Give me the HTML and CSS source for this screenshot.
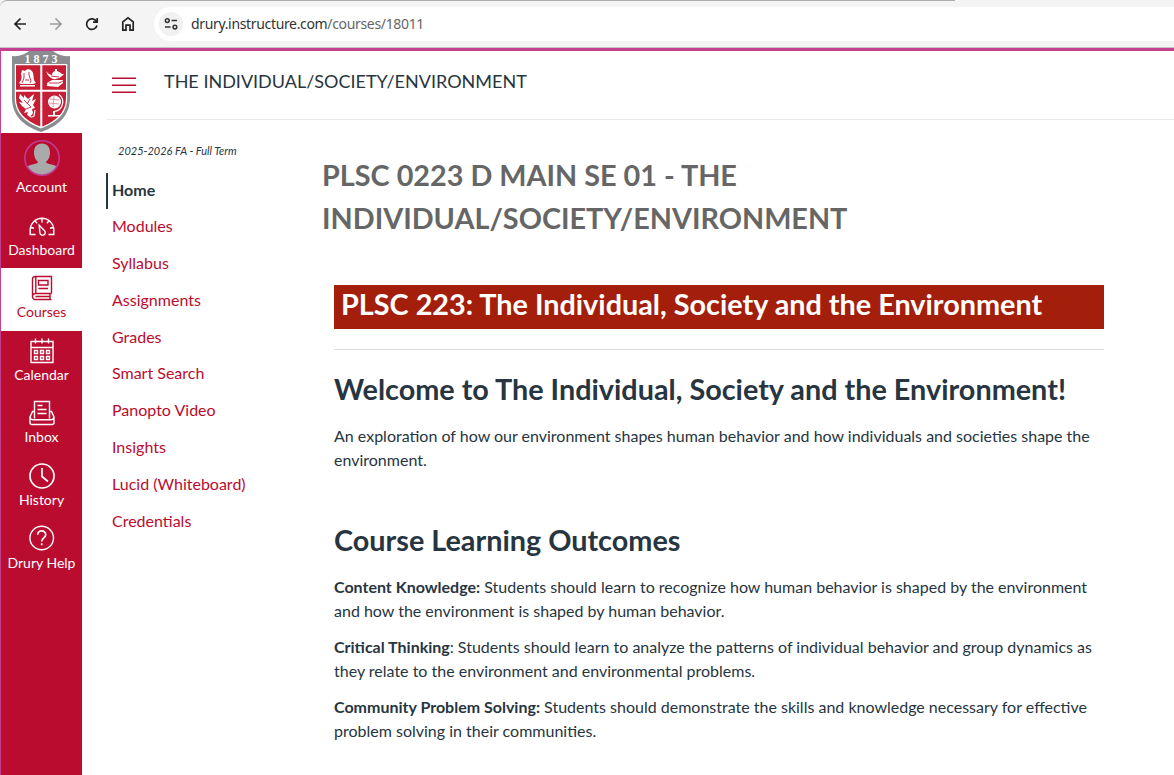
FILE: index.html
```html
<!DOCTYPE html>
<html lang="en">
<head>
<meta charset="utf-8">
<title>THE INDIVIDUAL/SOCIETY/ENVIRONMENT</title>
<link rel="stylesheet" href="styles.css">
</head>
<body>
<header class="browser">
  <div class="tabline"></div>
  <svg class="browser-icons" width="154" height="44" viewBox="0 2 154 44" fill="none" stroke="#222" stroke-width="1.7">
    <path d="M26 24H15M20.500 18.500L15 24l5.500 5.500"/>
    <path stroke="#9c9c9c" d="M50 24h11M55.500 18.500L61 24l-5.500 5.500"/>
    <path d="M96.500 21.500A5.300 5.300 0 1 0 97 25.500M97.200 18v4.200H93"/>
    <path d="M122.800 21.800l5.200-4 5.200 4v8.400h-3.200v-5h-4v5h-3.200z"/>
  </svg>
  <div class="address">
    <svg class="tune" width="24" height="24" viewBox="0 0 24 24" fill="none" stroke="#333" stroke-width="1.5"><circle cx="8.300" cy="8.600" r="1.900"/><path d="M12.500 8.600H18M6 15.100h5.500"/><circle cx="15.900" cy="15.100" r="1.900"/></svg>
    <span class="url">drury.instructure.com<span class="path">/courses/18011</span></span>
  </div>
</header>
<div class="app">
  <nav class="global">
    <div class="crest">
      <svg width="60" height="82" viewBox="0 0 60 82">
        <path fill="#8a8c8f" d="M1 5Q11 6 18 0H42Q49 6 59 5V47C59 64 48 75 30 81C12 75 1 64 1 47Z"/>
        <path fill="#fff" d="M3.800 13H56.200V47C56.200 62 46 71.500 30 77.500C14 71.500 3.800 62 3.800 47Z"/>
        <path fill="#c61f35" d="M5 14.200H29.300V38.800H5zM31.300 14.200H55V38.800H31.300zM5 40.800H29.300V75.600C14 69.500 5 61 5 47zM31.300 40.800H55V47C55 61 46 69.500 31.300 75.600z"/>
        <g fill="#fff">
          <path d="M11 19l3 1c2-3 7-2 8 2 1 4 0 7 3 10l-3 1H10l-2-1c3-3 3-6 2-9z"/>
          <path d="M9 34h15v1.500H9z"/>
          <path d="M35 20q3 4 6 4 0-3 3-4v-2h2v2q3 1 5 3l2 0-2 2q-4 4-9 3-5-2-7-8z"/>
          <path d="M36 32l5-3h11v3l-5 4-11-1z"/>
          <path d="M9 43l4 4v-3l4 4 6-5-2 7 4-2-3 6 2 3-3 1 1 4q-2 5-6 2l1-3-4 1 2-4-4-3-3-4 4 1-4-5z"/>
          <circle cx="43.500" cy="51" r="6.500"/>
          <path d="M37 64h12v1.500H37zM42 60h2v5h-2z"/>
        </g>
        <g fill="none" stroke="#c61f35" stroke-width=".9">
          <path d="M13 22v5l-2 5M18 21v3l2 6-1 2M14 29h4M38 32h10l4-2M40 25l8 1M13 49l7 7M19 48l-3 5M15 58l5-2"/>
          <path stroke="#e08a96" d="M39 48l9 1M38 52l10 1M43 45l-1 11"/>
        </g>
        <path fill="none" stroke="#fff" stroke-width="1.200" d="M48 43.500a9.500 9.500 0 0 1-5 17M17 62q2 6 6 3l1-6"/>
        <text class="year" x="31.500" y="11.500" text-anchor="middle">1873</text>
      </svg>
    </div>
    <a class="item account"><svg width="36" height="36" viewBox="0 0 36 36"><clipPath id="avatar"><circle cx="18" cy="18" r="17"/></clipPath><g clip-path="url(#avatar)" fill="#aaa"><path d="M18 3.500c5.500 0 8.300 4 8 10-.3 4-2 7-4 8.500.5 3 10 1.500 12 6.500v7H2v-7c2-5 11.500-3.500 12-6.500-2-1.500-3.700-4.500-4-8.500-.3-6 2.500-10 8-10z"/></g><circle cx="18" cy="18" r="17.200" fill="none" stroke="#c03b94" stroke-width="1.600"/></svg><span>Account</span></a>
    <a class="item"><svg width="26" height="26" viewBox="0 0 26 26"><path d="M6.500 21.500H1.200V17a11.800 11.800 0 0 1 23.600 0v4.500h-5.300M13 5.500v4M2 14.500l3 .8M24 14.500l-3 .8M6 8l2.200 2.200M20 8l-2.200 2.200M10.200 12.300l5.100 5.200a2.700 2.700 0 1 1-4.400 2.400z"/></svg><span>Dashboard</span></a>
    <a class="item active"><svg width="26" height="26" viewBox="0 0 26 26"><path d="M22.500 18.500V1.500H6.500a3 3 0 0 0-3 3v17.300a2.700 2.700 0 0 0 2.700 2.700h16.300M22.500 18.500H6.200a2.900 2.900 0 0 0-2.700 2.800M6.800 1.800v16.500M9.500 5.500h9.500v4.500H9.500zM9.500 13.500H19M6.500 21.500h15M21 18.500v6"/></svg><span>Courses</span></a>
    <a class="item"><svg width="26" height="26" viewBox="0 0 26 26"><path d="M2 3.500h22v21H2zM2 9.500h22M6.500.5v5M13 .5v5M19.500.5v5M5.500 12.500h3v3h-3zM11.500 12.500h3v3h-3zM17.500 12.500h3v3h-3zM5.500 18.500h3v3h-3zM11.500 18.500h3v3h-3zM17.500 18.500h3v3h-3z"/></svg><span>Calendar</span></a>
    <a class="item"><svg width="26" height="26" viewBox="0 0 26 26"><path d="M5.500 18.500V1.500h15v17M5.200 11.500H3.500L1 17v5.500a2 2 0 0 0 2 2h20a2 2 0 0 0 2-2V17l-2.500-5.500h-1.700M1.200 17c.3 2 1.500 2.800 3 2.800h17.600c1.500 0 2.700-.8 3-2.800M8.500 5.500h5M8.500 9.500h9M8.500 13.500h9"/></svg><span>Inbox</span></a>
    <a class="item"><svg width="26" height="26" viewBox="0 0 26 26"><g stroke-width="1.700"><circle cx="13" cy="13" r="12"/><path d="M13 5v8.500l6 5"/></g></svg><span>History</span></a>
    <a class="item"><svg width="26" height="26" viewBox="0 0 26 26"><circle cx="12.700" cy="13" r="11.800"/><path stroke-width="1.700" d="M8.700 9.800c0-5.200 8-5.200 8 0 0 3.300-4 3-4 6.700M12.700 18.200v2"/></svg><span>Drury Help</span></a>
  </nav>
  <main class="page">
    <div class="topbar"><div class="burger"><i></i><i></i><i></i></div><span class="crumb">THE INDIVIDUAL/SOCIETY/ENVIRONMENT</span></div>
    <div class="columns">
      <nav class="course-nav">
        <div class="term">2025-2026 FA - Full Term</div>
        <a class="current">Home</a><a>Modules</a><a>Syllabus</a><a>Assignments</a><a>Grades</a><a>Smart Search</a><a>Panopto Video</a><a>Insights</a><a>Lucid (Whiteboard)</a><a>Credentials</a>
      </nav>
      <article class="content">
        <h1 class="course-title">PLSC 0223 D MAIN SE 01 - THE<br>INDIVIDUAL/SOCIETY/ENVIRONMENT</h1>
        <div class="body">
          <h2 class="banner">PLSC 223: The Individual, Society and the Environment</h2>
          <div class="rule"></div>
          <h2 class="welcome">Welcome to The Individual, Society and the Environment!</h2>
          <p>An exploration of how our environment shapes human behavior and how individuals and societies shape the<br>environment.</p>
          <h2 class="outcomes">Course Learning Outcomes</h2>
          <p><b>Content Knowledge:</b> Students should learn to recognize how human behavior is shaped by the environment<br>and how the environment is shaped by human behavior.</p>
          <p><b>Critical Thinking</b>: Students should learn to analyze the patterns of individual behavior and group dynamics as<br>they relate to the environment and environmental problems.</p>
          <p><b>Community Problem Solving:</b> Students should demonstrate the skills and knowledge necessary for effective<br>problem solving in their communities.</p>
        </div>
      </article>
    </div>
  </main>
</div>
</body>
</html>
```
FILE: styles.css
```css
* { box-sizing: border-box; }
body { margin: 0; height: 775px; overflow: hidden; background: #fff; color: #273540; font: 16px/24px Lato, sans-serif; }
.browser { height: 48px; background: #f4f4f4; border-bottom: 1px solid #c3c5c5; display: grid; grid-template-columns: 154px 1fr; grid-template-rows: 7px 34px; }
.tabline { grid-column: 1 / 3; width: 955px; height: 7px; border-top: 1px solid #adadad; border-top-left-radius: 7px; }
.browser-icons { margin-top: -5px; }
.address { height: 34px; background: #fff; border-radius: 17px 0 0 17px; display: flex; align-items: center; padding-left: 5px; }
.tune { background: #f1f1f1; border-radius: 50%; }
.url { margin-left: 8px; font: 14px/20px "Noto Sans", sans-serif; letter-spacing: -.34px; color: #333; white-space: nowrap; }
.path { color: #666; }
.app { display: flex; height: 727px; border-top: 3px solid #c43e91; border-left: 1px solid #c43e91; }
.global { width: 81px; background: #ba0c2f; flex: none; }
.crest { height: 82px; background: #fff; padding: 0 0 0 10px; }
.crest svg { display: block; }
.year { font: bold 12px "Liberation Serif", serif; letter-spacing: 3px; fill: #fff; }
.item { height: 62.600px; display: flex; flex-direction: column; align-items: center; padding-top: 7px; color: #fff; font-size: 14px; line-height: 20px; white-space: nowrap; }
.item svg { flex: none; fill: none; stroke: currentColor; stroke-width: 1.4; margin-bottom: 1.150px; }
.item.account { height: 72.500px; padding-top: 7px; }
.account svg { stroke: none; margin-bottom: 1px; }
.item.active { background: #fff; color: #ba0c2f; }
.page { flex: 1; padding-left: 24px; min-width: 0; }
.topbar { height: 69px; border-bottom: 1px solid #e8eaec; display: flex; padding-left: 6px; }
.burger { width: 24px; display: flex; flex-direction: column; gap: 5px; padding-top: 26px; }
.burger i { height: 2px; background: #dd8697; border-bottom: 1px solid #ba0c2f; flex: none; }
.crumb { margin: 18px 0 0 28px; font-size: 18px; white-space: nowrap; }
.columns { display: flex; }
.course-nav { width: 192px; flex: none; padding-top: 19px; }
.term { font-size: 11px; font-style: italic; padding-left: 12px; height: 33.550px; white-space: nowrap; }
.course-nav a { display: block; height: 36px; line-height: 33px; padding-left: 6px; margin-bottom: .782px; color: #ba0c2f; }
.course-nav .current { border-left: 2px solid #273540; padding-left: 4px; font-weight: bold; color: #273540; }
.content { padding: 34px 0 0 24px; white-space: nowrap; }
h1, h2, p { margin: 0; }
h1, h2 { font-size: 28.800px; font-weight: bold; }
.course-title { line-height: 43.200px; color: #666; }
.body { padding-left: 12px; width: 782px; }
.banner { height: 44px; line-height: 38px; margin-top: 44.600px; padding-left: 7px; background: #a31f0b; color: #fff; }
.rule { height: 1px; background: #d8dbdd; margin-top: 20px; }
.welcome, .outcomes { line-height: 43px; }
.welcome { margin: 18px 0 13px; }
.outcomes { margin: 47px 0 13px; }
p { margin-bottom: 12px; }
```
